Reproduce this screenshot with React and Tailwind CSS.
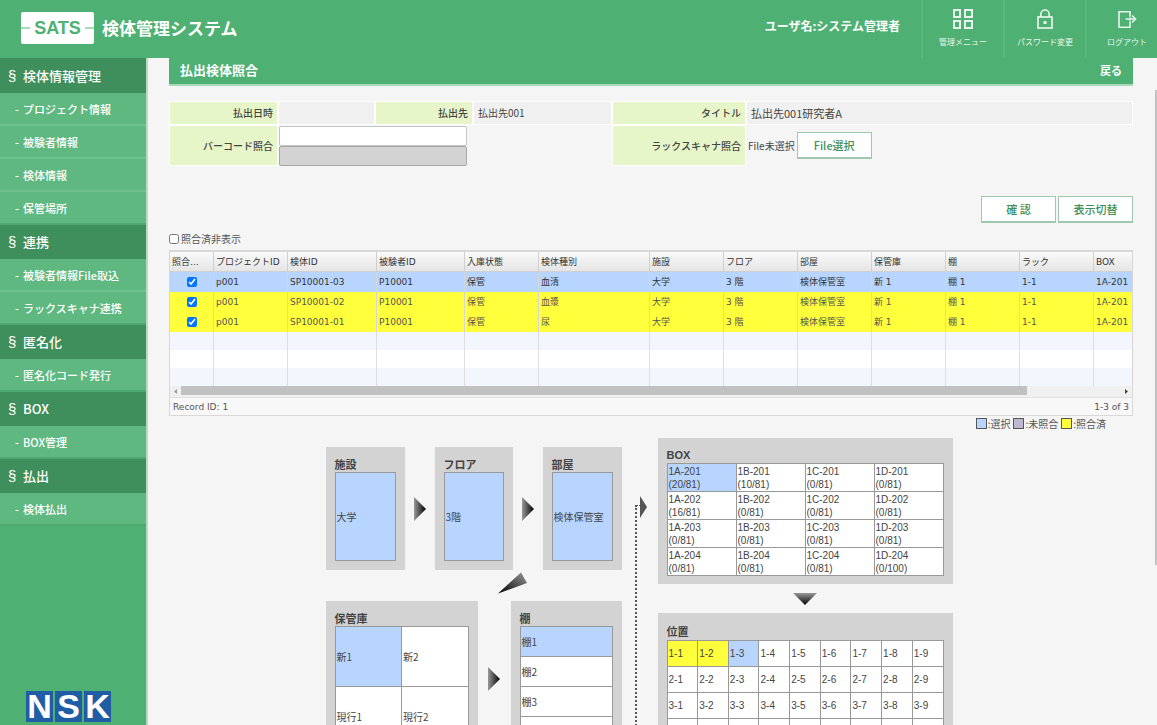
import React, { useState } from 'react';

const menu = [
  { title: '検体情報管理', items: ['プロジェクト情報', '被験者情報', '検体情報', '保管場所'] },
  { title: '連携', items: ['被験者情報File取込', 'ラックスキャナ連携'] },
  { title: '匿名化', items: ['匿名化コード発行'] },
  { title: 'BOX', items: ['BOX管理'] },
  { title: '払出', items: ['検体払出'] },
];

const columns = [
  { name: '照合…', width: 'w-[44px]' },
  { name: 'プロジェクトID', width: 'w-[74px]' },
  { name: '検体ID', width: 'w-[89px]' },
  { name: '被験者ID', width: 'w-[88px]' },
  { name: '入庫状態', width: 'w-[74px]' },
  { name: '検体種別', width: 'w-[111px]' },
  { name: '施設', width: 'w-[74px]' },
  { name: 'フロア', width: 'w-[74px]' },
  { name: '部屋', width: 'w-[74px]' },
  { name: '保管庫', width: 'w-[74px]' },
  { name: '棚', width: 'w-[74px]' },
  { name: 'ラック', width: 'w-[74px]' },
  { name: 'BOX', width: '' },
];

const place = ['大学', '3 階', '検体保管室', '新 1', '棚 1', '1-1', '1A-201'];

const records = [
  ['p001', 'SP10001-03', 'P10001', '保管', '血清', ...place],
  ['p001', 'SP10001-02', 'P10001', '保管', '血漿', ...place],
  ['p001', 'SP10001-01', 'P10001', '保管', '尿', ...place],
];

const boxes = [
  [['1A-201', '20/81'], ['1B-201', '10/81'], ['1C-201', '0/81'], ['1D-201', '0/81']],
  [['1A-202', '16/81'], ['1B-202', '0/81'], ['1C-202', '0/81'], ['1D-202', '0/81']],
  [['1A-203', '0/81'], ['1B-203', '0/81'], ['1C-203', '0/81'], ['1D-203', '0/81']],
  [['1A-204', '0/81'], ['1B-204', '0/81'], ['1C-204', '0/81'], ['1D-204', '0/100']],
];

const nine = [1, 2, 3, 4, 5, 6, 7, 8, 9];

function MenuIcon() {
  return (
    <svg width="20" height="20" viewBox="0 0 20 20" fill="none" stroke="currentColor" strokeWidth="2">
      <rect x="1" y="1" width="6" height="7" />
      <rect x="12" y="1" width="7" height="7" />
      <rect x="1" y="12" width="6" height="7" />
      <rect x="12" y="12" width="7" height="7" />
    </svg>
  );
}

function LockIcon() {
  return (
    <svg width="18" height="20" viewBox="0 0 18 20" fill="none" stroke="currentColor" strokeWidth="1.7">
      <rect x="2" y="8" width="14" height="11" />
      <path d="M4.800 8V5.200a4.200 4.200 0 0 1 8.400 0V8" />
      <rect x="7.500" y="12" width="3" height="3" fill="currentColor" stroke="none" />
    </svg>
  );
}

function LogoutIcon() {
  return (
    <svg width="20" height="20" viewBox="0 0 20 20" fill="none" stroke="currentColor" strokeWidth="1.6">
      <path d="M13 7V2.800H2v15.400h11V13" />
      <path d="M13 7v6" strokeWidth="1" />
      <path d="M8.500 10h10M15 6.500l3.500 3.500-3.500 3.500" />
    </svg>
  );
}

function HeaderLink({ icon, label }) {
  return (
    <a href="#" className="flex w-[82px] flex-col items-center border-l-2 border-[#5bb87d] pt-[9px] text-[#e6f5eb]">
      {icon}
      <span className="mt-[7px] text-[8px] leading-[12px]">{label}</span>
    </a>
  );
}

function Header() {
  return (
    <header className="flex h-[58px] shrink-0 bg-[#4eb173] text-white">
      <div className="flex h-[55px] items-center gap-2 pl-[21px]">
        <div className="flex h-[32px] w-[73px] items-center justify-between rounded-xs bg-white text-[#4eb173]">
          <span className="h-[2px] w-[9px] bg-[#a9d9b9]" />
          <span className="font-['Liberation_Sans',sans-serif] text-[18px] leading-[20px] font-bold">SATS</span>
          <span className="h-[2px] w-[9px] bg-[#a9d9b9]" />
        </div>
        <h1 className="text-[17px] leading-[24px] font-bold">検体管理システム</h1>
      </div>
      <div className="-mr-[10px] ml-auto flex">
        <p className="mr-[21px] pt-[17px] text-[12px] leading-[18px] font-bold">ユーザ名:システム管理者</p>
        <HeaderLink icon={<MenuIcon />} label="管理メニュー" />
        <HeaderLink icon={<LockIcon />} label="パスワード変更" />
        <HeaderLink icon={<LogoutIcon />} label="ログアウト" />
      </div>
    </header>
  );
}

function Sidebar() {
  return (
    <nav className="flex w-[148px] shrink-0 flex-col border-r-2 border-[#b5dcc3] bg-[#4eb173] text-white">
      <div className="border-t border-[#3f8f5c]">
        {menu.map((group) => (
          <div key={group.title}>
            <h2 className="flex h-[34px] items-center bg-[#3f8f5c] pl-[8px] text-[13px] leading-[20px] font-medium">
              <span className="w-[15px] font-['Liberation_Sans',sans-serif] text-[15px]">§</span>
              {group.title}
            </h2>
            {group.items.map((item) => (
              <a
                key={item}
                href="#"
                className="flex h-[33px] items-center border-b-2 border-[#6dc18c] bg-[#60b881] pl-[15px] text-[11px] leading-[16px] font-medium last:border-[#4ea872]"
              >
                <span className="w-[8px]">-</span>
                {item}
              </a>
            ))}
          </div>
        ))}
      </div>
      <div className="mt-auto mb-[3px] ml-[26px] flex gap-[2px] font-['Liberation_Sans',sans-serif] text-[34px] leading-[31px] font-bold">
        <span className="w-[27px] bg-[#1f5da5] text-center">N</span>
        <span className="w-[27px] bg-[#1f5da5] text-center">S</span>
        <span className="w-[27px] bg-[#1f5da5] text-center">K</span>
      </div>
    </nav>
  );
}

function SearchForm() {
  const label = 'flex items-center justify-end border border-white bg-[#e6f6c8] pr-[4px] font-medium';
  const value = 'flex items-center border border-white bg-[#f0f0f0] pl-[4px]';

  return (
    <div className="mt-[15px] grid grid-cols-[109px_97px_98px_139px_134px_1fr] grid-rows-[24px_41px] text-[10px] leading-[16px] text-[#444]">
      <div className={label}>払出日時</div>
      <div className={value}></div>
      <div className={label}>払出先</div>
      <div className={value}>払出先001</div>
      <div className={label}>タイトル</div>
      <div className={value + ' text-[11px]'}>払出先001研究者A</div>

      <label htmlFor="barcode" className={label}>バーコード照合</label>
      <div className="col-span-3 flex flex-col pt-px pl-px">
        <input id="barcode" type="text" className="h-[20px] w-[188px] rounded-xs border border-[#c4c4c4] bg-white px-1" />
        <input type="text" disabled aria-label="照合結果" className="h-[20px] w-[188px] rounded-xs border border-[#a8a8a8] bg-[#d3d3d3] px-1" />
      </div>
      <div className={label}>ラックスキャナ照合</div>
      <div className="flex items-center gap-[2px] pl-[2px]">
        <span>File未選択</span>
        <Button>File選択</Button>
      </div>
    </div>
  );
}

function Button({ children }) {
  return (
    <button
      type="button"
      className="h-[27px] w-[75px] border border-b-2 border-[#9fc9ae] bg-white text-[11px] leading-[16px] font-medium text-[#3f8f5c]"
    >
      {children}
    </button>
  );
}

function RecordTable() {
  const [checked, setChecked] = useState([true, true, true]);

  const toggle = (index) => {
    setChecked(checked.map((c, i) => (i === index ? !c : c)));
  };

  return (
    <div className="border border-t-2 border-[#d8d8d8] bg-white font-['DejaVu_Sans','Noto_Sans_CJK_JP',sans-serif] text-[9px] leading-[14px] text-[#333]">
      <table className="w-full table-fixed border-separate border-spacing-0">
        <thead>
          <tr className="h-[20px] bg-linear-to-b from-[#fafafa] to-[#e4e4e4]">
            {columns.map((col) => (
              <th
                key={col.name}
                className={'border-r border-b border-[#d0d0d0] p-0 pl-[2px] text-left font-normal whitespace-nowrap last:border-r-0 ' + col.width}
              >
                {col.name}
              </th>
            ))}
          </tr>
        </thead>
        <tbody>
          {records.map((row, i) => (
            <tr key={row[1]} className={i === 0 ? 'h-[20px] bg-[#b8d5ff]' : 'h-[20px] bg-[#ffff3c] text-[#555]'}>
              <td className="border-r border-[#d6d6d6] p-0">
                <input
                  type="checkbox"
                  aria-label={row[1]}
                  checked={checked[i]}
                  onChange={() => toggle(i)}
                  className="mx-auto block size-[10px]"
                />
              </td>
              {row.map((cell, j) => (
                <td key={j} className="border-r border-[#d6d6d6] p-0 pl-[2px] whitespace-nowrap last:border-r-0">
                  {cell}
                </td>
              ))}
            </tr>
          ))}
          {[0, 1, 2].map((i) => (
            <tr key={i} className="h-[18px] odd:bg-white even:bg-[#f3f6fc]">
              {columns.map((col) => (
                <td key={col.name} className="border-r border-[#dedede] p-0 last:border-r-0"></td>
              ))}
            </tr>
          ))}
        </tbody>
      </table>
      <div className="flex h-[11px] items-center bg-[#f0f0f0] px-[4px]">
        <svg width="3" height="5" viewBox="0 0 3 5" fill="#999"><path d="M3 0v5L0 2.500z" /></svg>
        <div className="mx-[4px] h-full flex-1">
          <div className="h-[9px] w-[90%] bg-[#c1c1c1]"></div>
        </div>
        <svg width="3" height="5" viewBox="0 0 3 5" fill="#444"><path d="M0 0v5l3-2.500z" /></svg>
      </div>
      <div className="flex h-[18px] items-center justify-between border-t border-[#e0e0e0] bg-[#f8f8f8] px-[3px] text-[#555]">
        <span>Record ID: 1</span>
        <span>1-3 of 3</span>
      </div>
    </div>
  );
}

function Legend() {
  return (
    <div className="flex h-[22px] items-start justify-end gap-[3px] pt-[2px] pr-[27px] text-[10px] leading-[12px] text-[#555]">
      <span className="flex"><i className="mr-px size-[11px] border border-[#555] bg-[#b8d5ff]"></i>:選択</span>
      <span className="flex"><i className="mr-px size-[11px] border border-[#555] bg-[#bdb9d0]"></i>:未照合</span>
      <span className="flex"><i className="mr-px size-[11px] border border-[#555] bg-[#ffff3c]"></i>:照合済</span>
    </div>
  );
}

function Panel({ title, className, children }) {
  return (
    <section className={'bg-[#d3d3d3] px-[9px] pb-[9px] ' + className}>
      <h3 className="pt-[10px] text-[11px] leading-[15px] font-bold text-[#444]">{title}</h3>
      {children}
    </section>
  );
}

function Cell({ selected, className, children }) {
  return (
    <div className={'flex items-center border-r border-b border-[#999] pl-px ' + (selected ? 'bg-[#b8d5ff] ' : 'bg-white ') + className}>
      {children}
    </div>
  );
}

function RightArrow() {
  return (
    <svg width="12" height="24" viewBox="0 0 12 24" className="self-center">
      <defs>
        <linearGradient id="toRight">
          <stop offset="0" stopColor="#999" />
          <stop offset="1" stopColor="#000" />
        </linearGradient>
      </defs>
      <path d="M0 0l12 12L0 24z" fill="url(#toRight)" />
    </svg>
  );
}

function StorageMap() {
  const frame = 'border-t border-l border-[#999]';

  return (
    <div className="flex justify-center pr-[24px] text-[10px] leading-[14px] text-[#444]">
      <div className="w-[296px] pt-[9px]">
        <div className="flex h-[123px] justify-between">
          <Panel title="施設" className="w-[79px]">
            <div className={frame}><Cell selected className="h-[88px]">大学</Cell></div>
          </Panel>
          <RightArrow />
          <Panel title="フロア" className="w-[78px]">
            <div className={frame}><Cell selected className="h-[88px]">3階</Cell></div>
          </Panel>
          <RightArrow />
          <Panel title="部屋" className="w-[79px]">
            <div className={frame}><Cell selected className="h-[88px]">検体保管室</Cell></div>
          </Panel>
        </div>
        <svg width="296" height="31" viewBox="0 0 296 31">
          <defs>
            <linearGradient id="toLeft" x1="1" y1="0" x2="0" y2="1">
              <stop offset="0" stopColor="#999" />
              <stop offset="1" stopColor="#000" />
            </linearGradient>
          </defs>
          <path d="M172 23.500L195 2.500l6 10.500z" fill="url(#toLeft)" />
        </svg>
        <div className="flex justify-between">
          <Panel title="保管庫" className="w-[152px]">
            <div className={'grid grid-cols-2 ' + frame}>
              <Cell selected className="h-[60px]">新1</Cell>
              <Cell className="h-[60px]">新2</Cell>
              <Cell className="h-[60px]">現行1</Cell>
              <Cell className="h-[60px]">現行2</Cell>
            </div>
          </Panel>
          <RightArrow />
          <Panel title="棚" className="w-[111px]">
            <div className={frame}>
              <Cell selected className="h-[30px]">棚1</Cell>
              <Cell className="h-[30px]">棚2</Cell>
              <Cell className="h-[30px]">棚3</Cell>
              <Cell className="h-[30px]">棚4</Cell>
            </div>
          </Panel>
        </div>
      </div>

      {/* Dotted connector from the shelf up to the box list */}
      <div className="flex w-[36px] items-start pt-[58px] pl-[13px]">
        <div className="mt-[9px] h-[320px] w-[5px] border-t border-l-2 border-dotted border-[#555]"></div>
        <svg width="7" height="22" viewBox="0 0 7 22"><path d="M0 0l7 11L0 22z" fill="#555" /></svg>
      </div>

      <div className="w-[295px] font-['Liberation_Sans','Noto_Sans_CJK_JP',sans-serif]">
        <Panel title="BOX" className="h-[146px]">
          <table className={'w-full table-fixed border-separate border-spacing-0 leading-[13px] ' + frame}>
            <tbody>
              {boxes.map((row) => (
                <tr key={row[0][0]}>
                  {row.map(([name, count]) => (
                    <td
                      key={name}
                      className={'border-r border-b border-[#999] p-0 pt-px pl-px ' + (name === '1A-201' ? 'bg-[#b8d5ff]' : 'bg-white')}
                    >
                      {name}<br />({count})
                    </td>
                  ))}
                </tr>
              ))}
            </tbody>
          </table>
        </Panel>
        <svg width="295" height="29" viewBox="0 0 295 29">
          <defs>
            <linearGradient id="toBottom" x1="0" y1="0" x2="0" y2="1">
              <stop offset="0" stopColor="#999" />
              <stop offset="1" stopColor="#000" />
            </linearGradient>
          </defs>
          <path d="M135 9h24l-12 12z" fill="url(#toBottom)" />
        </svg>
        <Panel title="位置" className="pt-[2px]">
          <table className={'w-full table-fixed border-separate border-spacing-0 ' + frame}>
            <tbody>
              {nine.map((r) => (
                <tr key={r} className="h-[26px]">
                  {nine.map((c) => {
                    let color = 'bg-white';
                    if (r === 1 && c < 3) color = 'bg-[#ffff3c]';
                    if (r === 1 && c === 3) color = 'bg-[#b8d5ff]';
                    return (
                      <td key={c} className={'border-r border-b border-[#999] p-0 pl-px ' + color}>
                        {r}-{c}
                      </td>
                    );
                  })}
                </tr>
              ))}
            </tbody>
          </table>
        </Panel>
      </div>
    </div>
  );
}

function App() {
  const [hideMatched, setHideMatched] = useState(false);

  return (
    <div className="flex h-screen flex-col overflow-hidden bg-[#f5f5f5] font-['Noto_Sans_CJK_JP',sans-serif]">
      <Header />
      <div className="relative flex min-h-0 flex-1">
        <Sidebar />
        <main className="min-w-0 flex-1 overflow-y-auto pr-[24px] pl-[21px] [scrollbar-width:none]">
          <div className="flex h-[28px] items-center justify-between border-b-2 border-[#a9d9b9] bg-[#4eb173] pr-[11px] pb-[2px] pl-[11px] font-bold text-white">
            <h2 className="text-[13px] leading-[20px]">払出検体照合</h2>
            <a href="#" className="text-[11px] leading-[16px]">戻る</a>
          </div>
          <SearchForm />
          <div className="mt-[30px] flex justify-end gap-[2px]">
            <Button>確 認</Button>
            <Button>表示切替</Button>
          </div>
          <label className="mt-[9px] flex h-[18px] items-center gap-[2px] pb-[5px] text-[10px] leading-[14px] text-[#555]">
            <input
              type="checkbox"
              checked={hideMatched}
              onChange={(e) => setHideMatched(e.target.checked)}
              className="size-[10px]"
            />
            照合済非表示
          </label>
          <RecordTable />
          <Legend />
          <StorageMap />
        </main>
        <div className="absolute top-[32px] right-0 h-[475px] w-[2px] bg-[#c1c1c1]"></div>
      </div>
    </div>
  );
}

export default App;
